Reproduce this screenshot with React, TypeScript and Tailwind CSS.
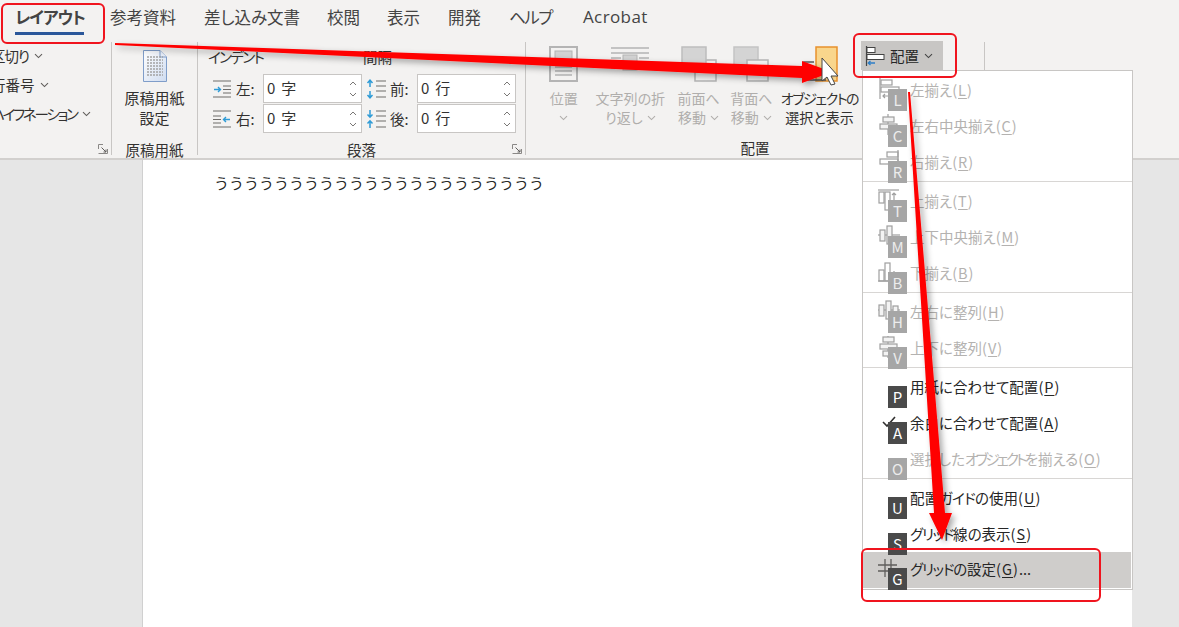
import React from "react";

const font = "[font-family:'Noto_Sans_CJK_JP','Noto_Sans',sans-serif] [font-feature-settings:'palt']";

function Chevron({ c = "#605e5c" }: { c?: string }) {
  return (
    <svg width="9" height="6" viewBox="0 0 9 6" className="shrink-0">
      <path d="M1 1.2 L4.5 4.6 L8 1.2" fill="none" stroke={c} strokeWidth="1.1" />
    </svg>
  );
}

function Launcher() {
  return (
    <svg width="10" height="10" viewBox="0 0 10 10">
      <path d="M0.5 5V0.5H5M0.5 9.5H9.5V5" fill="none" stroke="#8a8886" strokeWidth="1" />
      <path d="M3.5 3.5L8 8M8 5.5V8H5.5" fill="none" stroke="#605e5c" strokeWidth="1" />
    </svg>
  );
}

function Spinner({ value, unit }: { value: string; unit: string }) {
  return (
    <div className="flex h-[29px] w-[99px] items-center justify-between border border-[#c8c6c4] bg-white pl-[2px] pr-[4px] text-[15px] text-[#323130]">
      <span className="flex gap-[6px] pl-px">
        <span>{value}</span>
        <span>{unit}</span>
      </span>
      <span className="flex flex-col gap-[6px]">
        <svg width="8" height="5" viewBox="0 0 8 5">
          <path d="M1 4L4 1L7 4" fill="none" stroke="#797775" />
        </svg>
        <svg width="8" height="5" viewBox="0 0 8 5">
          <path d="M1 1L4 4L7 1" fill="none" stroke="#797775" />
        </svg>
      </span>
    </div>
  );
}

function SpaceIcon({ kind }: { kind: "l" | "r" | "b" | "a" }) {
  const blue = "#2e9bd6";
  const dark = "#6e6c6a";
  if (kind === "l" || kind === "r") {
    const lines =
      kind === "l" ? (
        <path d="M0 1H18M0 17H18M10 6H18M10 9.5H18M10 13H18" stroke={dark} strokeWidth="1.2" fill="none" />
      ) : (
        <path d="M0 1H18M0 17H18M0 6H8M0 9.5H8M0 13H8" stroke={dark} strokeWidth="1.2" fill="none" />
      );
    const arrow =
      kind === "l" ? (
        <path d="M1 9.5H7.5M5 7L7.5 9.5L5 12" stroke={blue} strokeWidth="1.4" fill="none" />
      ) : (
        <path d="M17 9.5H10.5M13 7L10.5 9.5L13 12" stroke={blue} strokeWidth="1.4" fill="none" />
      );
    return (
      <svg width="18" height="18" viewBox="0 0 18 18" className="shrink-0">
        {lines}
        {arrow}
      </svg>
    );
  }
  return (
    <svg width="20" height="20" viewBox="0 0 20 20" className="shrink-0">
      <path d="M10 2H20M10 7H20M10 12H20M10 18H20" stroke={dark} strokeWidth="1.2" fill="none" />
      {kind === "b" ? (
        <path d="M4 1V8M1.5 4L4 1.2L6.5 4M4 12V19M1.5 16L4 18.8L6.5 16" stroke={blue} strokeWidth="1.5" fill="none" />
      ) : (
        <path d="M4 1V8M1.5 5.5L4 8.2L6.5 5.5M4 12V19M1.5 14.5L4 11.8L6.5 14.5" stroke={blue} strokeWidth="1.5" fill="none" />
      )}
    </svg>
  );
}

function PageIcon() {
  return (
    <svg width="24" height="32" viewBox="0 0 24 32">
      <defs>
        <linearGradient id="pg" x1="0" y1="0" x2="1" y2="1">
          <stop offset="0" stopColor="#ffffff" />
          <stop offset="1" stopColor="#cfdcf0" />
        </linearGradient>
      </defs>
      <path d="M0.5 0.5H17L23.5 7V31.5H0.5Z" fill="url(#pg)" stroke="#7f9dc9" />
      <path d="M17 0.5V7H23.5" fill="#e8eef8" stroke="#7f9dc9" />
      {[7, 10, 13, 16, 19, 22, 25].map((y) => (
        <path key={y} d={`M4 ${y}H20`} stroke="#a3a3a3" strokeWidth="1.4" strokeDasharray="2 1" />
      ))}
    </svg>
  );
}

const g = "#b4b4b4";

function PosIcon() {
  return (
    <svg width="30" height="36" viewBox="0 0 30 36">
      <rect x="1" y="1" width="27" height="34" fill="#f3f2f1" stroke={g} strokeWidth="2" />
      <rect x="6" y="5" width="17" height="11" fill="#d2d2d2" stroke={g} />
      <path d="M6 21H23M6 25H23M6 29H23" stroke={g} strokeWidth="1.6" />
    </svg>
  );
}

function WrapIcon() {
  return (
    <svg width="38" height="36" viewBox="0 0 38 36">
      <path d="M0 2H38M0 7H38M0 12H10M28 12H38M0 17H10M28 17H38M0 22H10M28 22H38" stroke={g} strokeWidth="1.4" />
      <rect x="12" y="9" width="14" height="15" fill="#d2d2d2" stroke={g} />
    </svg>
  );
}

function LayerIcon({ front }: { front: boolean }) {
  return (
    <svg width="36" height="36" viewBox="0 0 36 36">
      {front ? (
        <>
          <rect x="14" y="14" width="21" height="21" fill="#f3f2f1" stroke={g} strokeWidth="1.5" />
          <rect x="1" y="1" width="24" height="24" fill="#d4d4d4" stroke="#bdbdbd" strokeWidth="1.5" />
        </>
      ) : (
        <>
          <rect x="1" y="1" width="24" height="24" fill="#d4d4d4" stroke="#c4c4c4" strokeWidth="1.5" />
          <rect x="14" y="14" width="21" height="21" fill="#f3f2f1" stroke={g} strokeWidth="1.5" />
        </>
      )}
    </svg>
  );
}

function RibbonBtn({
  icon,
  lines,
  disabled = true,
  chevronLine,
  width,
}: {
  icon: React.ReactNode;
  lines: React.ReactNode[];
  disabled?: boolean;
  chevronLine?: number;
  width: string;
}) {
  return (
    <div className={`flex flex-col items-center ${width} ${disabled ? "text-[#b0aeac]" : "text-[#323130]"}`}>
      <div className="flex h-[36px] items-center justify-center">{icon}</div>
      <div className="mt-[7px] flex flex-col items-center text-[14px] leading-[19px] whitespace-nowrap">
        {lines.map((l, i) => (
          <span key={i} className="flex h-[19px] items-center gap-[4px]">
            {l}
            {chevronLine === i && <Chevron c="#b0aeac" />}
          </span>
        ))}
      </div>
    </div>
  );
}

function Group({ w, label, launcher, children }: { w: string; label: string; launcher?: boolean; children: React.ReactNode }) {
  return (
    <div className={`relative flex h-[113px] flex-col border-r border-[#c8c6c4] ${w}`}>
      <div className="min-h-0 flex-1">{children}</div>
      <div className="flex h-[10px] items-center justify-center text-[14.5px] text-[#323130]">{label}</div>
      {launcher && (
        <div className="absolute right-[3px] bottom-[1px]">
          <Launcher />
        </div>
      )}
    </div>
  );
}

type Item = {
  text: React.ReactNode;
  key: string;
  tip: string;
  on?: boolean;
  icon?: React.ReactNode;
  sep?: boolean;
  check?: boolean;
  hot?: boolean;
  tail?: string;
};

function MI({ children }: { children: React.ReactNode }) {
  return (
    <svg width="22" height="24" viewBox="0 0 22 24" fill="none" stroke="#9f9f9f" strokeWidth="1.2" className="absolute top-[4px] left-[15px]">
      {children}
    </svg>
  );
}

const items: Item[] = [
  { text: "左揃え", key: "L", tip: "L", icon: <MI><path d="M2 1V22" /><rect x="3" y="3" width="11" height="5" /><rect x="3" y="10" width="18" height="5" /><path d="M5 19H10M7 17L5 19L7 21" /></MI> },
  { text: "左右中央揃え", key: "C", tip: "C", icon: <MI><path d="M10 1V22" /><rect x="5" y="4" width="11" height="5" fill="#f3f3f3" /><rect x="2" y="11" width="17" height="5" fill="#f3f3f3" /></MI> },
  { text: "右揃え", key: "R", tip: "R", sep: true, icon: <MI><path d="M20 1V22" /><rect x="9" y="3" width="11" height="5" /><rect x="2" y="10" width="18" height="5" /><path d="M10 19H17M15 17L17 19L15 21" /></MI> },
  { text: "上揃え", key: "T", tip: "T", icon: <MI><path d="M0 2H21" /><rect x="1" y="4" width="5" height="11" /><rect x="7" y="4" width="5" height="18" /><path d="M16 14V5M14 7L16 5L18 7" /></MI> },
  { text: "上下中央揃え", key: "M", tip: "M", icon: <MI><path d="M0 11H22" /><rect x="2" y="6" width="5" height="11" fill="#f3f3f3" /><rect x="9" y="2" width="5" height="18" fill="#f3f3f3" /></MI> },
  { text: "下揃え", key: "B", tip: "B", sep: true, icon: <MI><path d="M0 21H21" /><rect x="1" y="10" width="5" height="11" /><rect x="7" y="3" width="5" height="18" /><path d="M16 11V19M14 17L16 19L18 17" /></MI> },
  { text: "左右に整列", key: "H", tip: "H", icon: <MI><path d="M0 11H22" /><rect x="1" y="6" width="5" height="11" fill="#f3f3f3" /><rect x="8" y="2" width="5" height="18" fill="#f3f3f3" /><rect x="15" y="7" width="5" height="9" fill="#f3f3f3" /></MI> },
  { text: "上下に整列", key: "V", tip: "V", sep: true, icon: <MI><path d="M10 1V23" /><rect x="5" y="2" width="11" height="5" fill="#f3f3f3" /><rect x="2" y="9" width="17" height="5" fill="#f3f3f3" /><rect x="5" y="16" width="11" height="5" fill="#f3f3f3" /></MI> },
  { text: "用紙に合わせて配置", key: "P", tip: "P", on: true },
  { text: "余白に合わせて配置", key: "A", tip: "A", on: true, check: true },
  { text: <>選択した<span className="tracking-[-2.8px]">オブジェクト</span>を揃える</>, key: "O", tip: "O", sep: true },
  { text: <>配置<span className="tracking-[-0.7px]">ガイド</span>の使用</>, key: "U", tip: "U", on: true },
  { text: <><span className="tracking-[-1.2px]">グリッド</span>線の表示</>, key: "S", tip: "S", on: true },
  { text: <><span className="tracking-[-1.2px]">グリッド</span>の設定</>, key: "G", tip: "G", on: true, hot: true, tail: "..." },
];

function MenuRow({ it }: { it: Item }) {
  return (
    <>
      <div className={`relative flex h-[36px] items-center pb-[2px] pl-[47px] text-[14.5px] ${it.on ? "text-[#262626]" : "text-[#b4b2b0]"} ${it.hot ? "-mt-px mr-px bg-[#cfcdcb]" : ""}`}>
        {it.icon}
        {it.check && (
          <svg width="14" height="12" viewBox="0 0 14 12" className="absolute top-[10px] left-[19px]">
            <path d="M1 6L5 10L13 1" fill="none" stroke="#323130" strokeWidth="1.6" />
          </svg>
        )}
        {it.hot && (
          <svg width="20" height="20" viewBox="0 0 20 20" className="absolute top-[6px] left-[15px]">
            <path d="M7 1V19M13 1V19M0 7H19M0 13H19" stroke="#605e5c" strokeWidth="1.3" />
          </svg>
        )}
        <span className="whitespace-nowrap">
          {it.text}
          <span className="tracking-[1px]">(<span className="underline underline-offset-2">{it.key}</span>)</span>
          {it.tail}
        </span>
        <span className={`absolute top-[16px] left-[25px] z-10 flex h-[22px] w-[19px] items-center justify-center text-[15px] ${it.on ? "bg-[#4a4a4a] text-white" : "bg-[#a6a6a6] text-[#ececec]"}`}>
          {it.tip}
        </span>
      </div>
      {it.sep && <div className="mb-[2px] h-px bg-[#d8d6d4]" />}
    </>
  );
}

export default function App() {
  return (
    <div className={`relative flex h-[627px] w-[1179px] flex-col overflow-hidden bg-[#e6e6e6] ${font}`}>
      {/* Ribbon */}
      <div className="z-10 h-[160px] shrink-0 border-b-2 border-[#d2d0ce] bg-[#f3f2f1]">
        <div className="flex h-[42px] items-start pt-[5px] pl-[15px] text-[16.5px] leading-[24px] text-[#444]">
          <div className="mr-[26px] flex w-[69px] flex-col font-bold whitespace-nowrap text-[#444]">
            <span className="tracking-[-1px]">レイアウト</span>
            <span className="mt-[3px] h-[3px] w-[69px] bg-[#2b579a]" />
          </div>
          <span className="mr-[28px]">参考資料</span>
          <span className="mr-[27px]">差し込み文書</span>
          <span className="mr-[27px]">校閲</span>
          <span className="mr-[28px]">表示</span>
          <span className="mr-[28px]">開発</span>
          <span className="mr-[31px] tracking-[-1.5px]">ヘルプ</span>
          <span className="[font-family:'Open_Sans',sans-serif] text-[17px] tracking-[0.4px]">Acrobat</span>
        </div>
        <div className="flex h-[113px] text-[#323130]">
          {/* Page setup clipped */}
          <Group w="w-[112px]" label="" launcher>
            <div className="-ml-[9px] flex flex-col gap-[11px] pt-[5px] text-[14.5px] leading-[18px] whitespace-nowrap">
              <span className="flex items-center gap-[5px]"><span className="tracking-[-1px]">区切り</span><Chevron /></span>
              <span className="flex items-center gap-[5px]">行番号<Chevron /></span>
              <span className="flex items-center gap-[5px]"><span className="tracking-[-2.2px]">ハイフネーション</span><Chevron /></span>
            </div>
          </Group>
          <Group w="w-[86px]" label="原稿用紙">
            <div className="flex flex-col items-center pt-[8px] text-[15px] leading-[20px]">
              <PageIcon />
              <span className="mt-[6px]">原稿用紙</span>
              <span>設定</span>
            </div>
          </Group>
          <Group w="w-[328px]" label="段落" launcher>
            <div className="flex flex-col pt-[5px] pl-[10px]">
              <div className="flex h-[27px] text-[14.5px] leading-[20px]">
                <span className="w-[155px] tracking-[-1.6px]">インデント</span>
                <span>間隔</span>
              </div>
              <div className="flex flex-col gap-px">
                <div className="flex items-center">
                  <div className="flex w-[55px] items-center gap-[5px] pl-[5px] text-[14.5px]"><SpaceIcon kind="l" /><span>左:</span></div>
                  <Spinner value="0" unit="字" />
                  <div className="flex w-[55px] items-center gap-[4px] pl-[4px] text-[14.5px]"><SpaceIcon kind="b" /><span>前:</span></div>
                  <Spinner value="0" unit="行" />
                </div>
                <div className="flex items-center">
                  <div className="flex w-[55px] items-center gap-[5px] pl-[5px] text-[14.5px]"><SpaceIcon kind="r" /><span>右:</span></div>
                  <Spinner value="0" unit="字" />
                  <div className="flex w-[55px] items-center gap-[4px] pl-[4px] text-[14.5px]"><SpaceIcon kind="a" /><span>後:</span></div>
                  <Spinner value="0" unit="行" />
                </div>
              </div>
            </div>
          </Group>
          {/* Arrange */}
          <div className="flex h-[113px] w-[459px] border-r border-[#c8c6c4]">
            <div className="flex w-[335px] flex-col">
              <div className="flex flex-1 items-start gap-0 pt-[4px] pl-[13px]">
                <RibbonBtn width="w-[50px]" icon={<PosIcon />} lines={["位置", ""]} chevronLine={1} />
                <RibbonBtn width="w-[85px]" icon={<WrapIcon />} lines={["文字列の折", "り返し"]} chevronLine={1} />
                <RibbonBtn width="w-[53px]" icon={<LayerIcon front />} lines={["前面へ", "移動"]} chevronLine={1} />
                <RibbonBtn width="w-[54px]" icon={<LayerIcon front={false} />} lines={["背面へ", "移動"]} chevronLine={1} />
                <RibbonBtn
                  width="w-[84px]"
                  disabled={false}
                  icon={
                    <svg width="36" height="36" viewBox="0 0 36 36">
                      <rect x="14" y="1" width="21" height="34" fill="#f9d68c" stroke="#e8912d" strokeWidth="1.5" />
                      <path d="M12 16H2V34H24" fill="none" stroke="#5a5a5a" strokeWidth="1.5" />
                    </svg>
                  }
                  lines={[<span className="tracking-[-1.4px]">オブジェクトの</span>, "選択と表示"]}
                />
              </div>
              <div className="flex h-[14px] items-center justify-center pl-[123px] text-[14.5px]">配置</div>
            </div>
            <div className="-mt-px">
              <div className="flex h-[29px] w-[82px] items-center gap-[5px] bg-[#c8c6c4] pl-[4px] text-[14.5px] text-[#262626]">
                <svg width="20" height="22" viewBox="0 0 20 22" className="shrink-0">
                  <path d="M1.5 1V21" stroke="#444" strokeWidth="1.2" />
                  <rect x="2" y="2.5" width="8" height="5" fill="#fff" stroke="#444" />
                  <rect x="2" y="9.5" width="17" height="5" fill="#fff" stroke="#444" />
                  <path d="M3 18H10M5.5 16L3.2 18L5.5 20" stroke="#2e7fc7" strokeWidth="1.3" fill="none" />
                </svg>
                <span>配置</span>
                <Chevron c="#444" />
              </div>
            </div>
          </div>
        </div>
      </div>

      {/* Document */}
      <div className="flex min-h-0 flex-1 pr-[47px] pl-[142px]">
        <div className="flex-1 border-l border-[#d0d0d0] bg-white pt-[12px] pl-[71px] text-[15px] leading-[22px] whitespace-nowrap text-[#262626] [font-feature-settings:normal]">
          うううううううううううううううううううううう
        </div>
      </div>

      {/* Dropdown menu */}
      <div className="absolute top-[70px] left-[862px] z-20 w-[271px] border border-[#c8c6c4] bg-white pt-[2px] pb-px">
        {items.map((it) => (
          <MenuRow key={it.key} it={it} />
        ))}
      </div>

      {/* Annotation arrows */}
      <svg width="1179" height="627" viewBox="0 0 1179 627" className="pointer-events-none absolute inset-0 z-30">
        <defs>
          <filter id="sh" x="-5%" y="-5%" width="110%" height="110%">
            <feDropShadow dx="3" dy="3" stdDeviation="3" floodColor="#000" floodOpacity="0.35" />
          </filter>
        </defs>
        <g filter="url(#sh)" fill="#ff0000">
          <polygon points="115,43 802,66 802,61 832,72 802,83 802,78 115,45" />
          <polygon points="908,92 910,92 945,513 952,513 942,540 929,513 934,513" />
        </g>
        <path d="M822 58 L838 76 L831 76 L835 84 L831 85 L827 77 L822 81 Z" fill="#fff" stroke="#444" strokeWidth="1" />
      </svg>

      {/* Annotation frames */}
      <div className="absolute top-[3px] left-[1px] z-30 h-[41px] w-[104px] rounded-[6px] border-2 border-[#f0141e]" />
      <div className="absolute top-[33px] left-[853px] z-30 h-[45px] w-[104px] rounded-[6px] border-2 border-[#f0141e]" />
      <div className="absolute top-[548px] left-[861px] z-30 h-[54px] w-[240px] rounded-[6px] border-2 border-[#f0141e]" />
    </div>
  );
}
